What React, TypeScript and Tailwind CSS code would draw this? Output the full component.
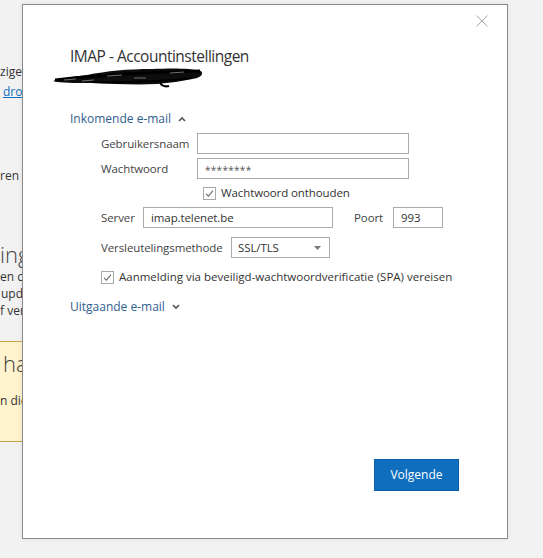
import React from "react";

// ── Small pieces ──────────────────────────────────────────────────────────────

function Check() {
  return (
    <span className="flex h-[13px] w-[13px] items-center justify-center border border-[#a8a8a8] bg-white">
      <svg width="9" height="9" viewBox="0 0 9 9" fill="none">
        <path d="M1 4.8 L3.4 7.2 L8 1.6" stroke="#6d6d6d" strokeWidth="1.1" />
      </svg>
    </span>
  );
}

function Field({ w, value, mono }: { w: string; value?: string; mono?: boolean }) {
  return (
    <div className={`flex h-[21px] items-center border border-[#ababab] bg-white px-[7px] text-[11.5px] text-[#333] ${w}`}>
      <span className={mono ? "pt-[3px] text-[10px] tracking-[0.3px] text-[#555]" : ""}>{value}</span>
    </div>
  );
}

// the hand-drawn blot covering the e-mail address
function Scribble() {
  return (
    <svg width="152" height="21" viewBox="0 0 152 21" className="ml-[-18px]">
      <path
        d="M1 14 C8 11 20 10 35 8 C55 4 75 2 100 2 C120 1 138 1 149 4 C152 7 149 11 140 12 C130 14 118 16 105 17 C85 18 60 17 40 16 C22 16 8 16 1 14 Z"
        fill="#0d0d0d"
      />
      <path d="M3 13 C30 10 70 6 148 4" stroke="#000" strokeWidth="3" fill="none" />
      <path d="M40 15 C70 16 100 15 140 11" stroke="#000" strokeWidth="2" fill="none" />
      <path d="M108 16 C110 19 113 20 117 19" stroke="#000" strokeWidth="2" fill="none" />
      <path d="M12 13 L24 12 M55 9 L70 8 M118 6 L132 5 M82 11 L94 11 M30 14 L42 13" stroke="#8a8a8a" strokeWidth="0.8" />
    </svg>
  );
}

// ── Main ──────────────────────────────────────────────────────────────────────

export default function App() {
  return (
    <div className="relative h-[558px] w-[543px] overflow-hidden bg-[#f2f2f2] font-['Open_Sans',sans-serif] text-[#444]">
      {/* page behind the dialog */}
      <div className="flex w-[30px] flex-col whitespace-nowrap text-[12px] text-[#333]">
        <div className="mt-[64px] h-[16px] leading-[16px]">zigen</div>
        <div className="mt-[4px] h-[16px] pl-[3px] leading-[16px] text-[#106ebe] underline">droi</div>
        <div className="mt-[68px] h-[16px] leading-[16px]">ren d</div>
        <div className="mt-[56px] h-[28px] text-[22px] font-light leading-[28px] text-[#444]">ing</div>
        <div className="h-[17px] leading-[17px]">en c</div>
        <div className="h-[17px] pl-[1px] leading-[17px]">upda</div>
        <div className="h-[17px] leading-[17px]">f ver</div>
        <div className="mt-[22px] flex h-[101px] flex-col border-y border-[#c9a64a] bg-[#fff4ce]">
          <div className="mt-[7px] pl-[3px] text-[22px] font-light leading-[28px] text-[#444]">ha</div>
          <div className="mt-[16px] leading-[16px]">n die</div>
        </div>
      </div>

      {/* dialog window */}
      <div className="absolute left-[22px] top-[4px] flex h-[535px] w-[486px] flex-col border border-[#8a8a8a] bg-white shadow-[0_0_6px_rgba(0,0,0,0.08)]">
        <button className="absolute right-[17px] top-[8px] flex h-[16px] w-[16px] items-center justify-center">
          <svg width="12" height="12" viewBox="0 0 12 12">
            <path d="M0.5 0.5 L11.5 11.5 M11.5 0.5 L0.5 11.5" stroke="#a6a6a6" strokeWidth="1" />
          </svg>
        </button>

        <div className="flex flex-1 flex-col pl-[47px]">
          <h1 className="mt-[40px] h-[22px] text-[15.5px] leading-[22px] tracking-[-0.5px] text-[#333]">
            IMAP - Accountinstellingen
          </h1>
          <Scribble />

          <div className="mt-[22px] flex h-[18px] items-center gap-[7px] text-[12px] text-[#31608e]">
            <span>Inkomende e-mail</span>
            <svg width="8" height="6" viewBox="0 0 8 6">
              <path d="M1 5 L4 2 L7 5" stroke="#555" strokeWidth="1.6" fill="none" />
            </svg>
          </div>

          <div className="ml-[31px] flex flex-col text-[11.5px] tracking-[-0.1px]">
            <div className="mt-[5px] flex items-center">
              <span className="w-[96px]">Gebruikersnaam</span>
              <Field w="w-[212px]" />
            </div>
            <div className="mt-[4px] flex items-center">
              <span className="w-[96px]">Wachtwoord</span>
              <Field w="w-[212px]" value="********" mono />
            </div>
            <div className="mt-[6px] flex h-[16px] items-center gap-[5px] pl-[102px]">
              <Check />
              <span className="text-[#333]">Wachtwoord onthouden</span>
            </div>
            <div className="mt-[6px] flex items-center">
              <span className="w-[42px]">Server</span>
              <Field w="w-[190px]" value="imap.telenet.be" />
              <span className="ml-[21px] w-[39px]">Poort</span>
              <Field w="w-[50px]" value="993" />
            </div>
            <div className="mt-[9px] flex items-center">
              <span className="w-[130px]">Versleutelingsmethode</span>
              <div className="flex h-[21px] w-[99px] items-center justify-between border border-[#ababab] bg-white pl-[6px] pr-[8px] text-[11.5px] text-[#333]">
                <span>SSL/TLS</span>
                <svg width="7" height="4" viewBox="0 0 7 4">
                  <path d="M0 0 L7 0 L3.5 4 Z" fill="#777" />
                </svg>
              </div>
            </div>
            <div className="mt-[11px] flex h-[16px] items-center gap-[5px]">
              <Check />
              <span className="tracking-[0px] text-[#333]">Aanmelding via beveiligd-wachtwoordverificatie (SPA) vereisen</span>
            </div>
          </div>

          <div className="mt-[13px] flex h-[18px] items-center gap-[7px] text-[12px] text-[#31608e]">
            <span>Uitgaande e-mail</span>
            <svg width="8" height="6" viewBox="0 0 8 6">
              <path d="M1 1 L4 4 L7 1" stroke="#555" strokeWidth="1.6" fill="none" />
            </svg>
          </div>

          <div className="mb-[47px] mt-auto flex justify-end pr-[48px]">
            <button className="h-[32px] w-[85px] border border-[#0b5ea8] bg-[#106ebe] text-[12px] text-white">
              Volgende
            </button>
          </div>
        </div>
      </div>
    </div>
  );
}
